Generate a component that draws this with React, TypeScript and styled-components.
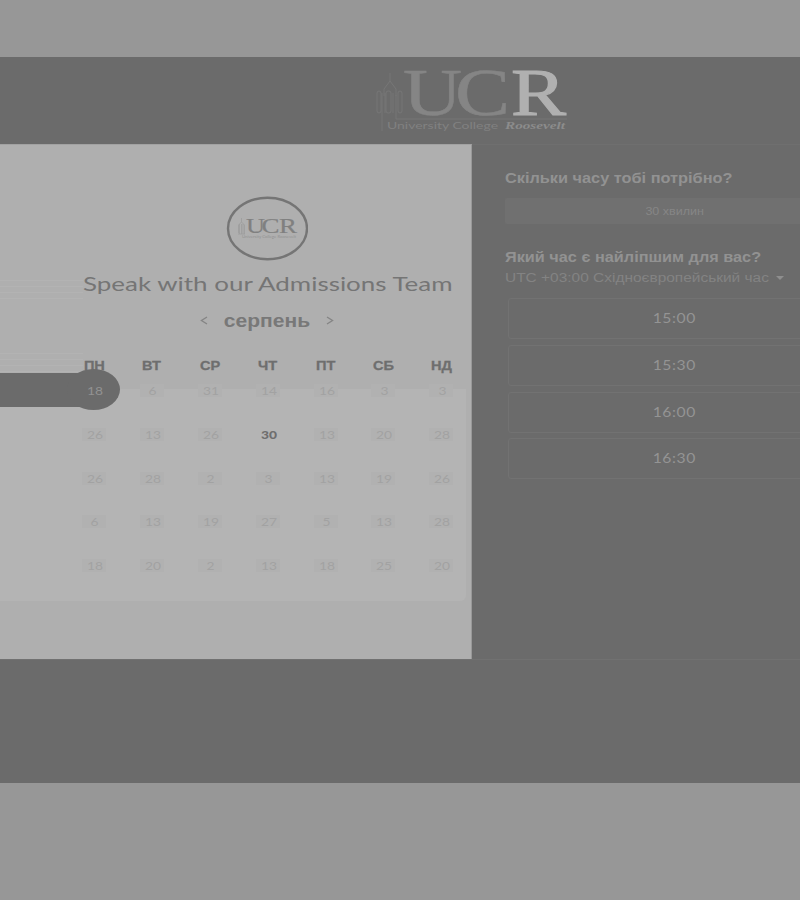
import React from "react";
import styled, { createGlobalStyle } from "styled-components";

const Global = createGlobalStyle`
  * { box-sizing: border-box; }
  body { margin: 0; background: #979797; overflow: hidden; }
`;

const Page = styled.div`
  width: 800px;
  height: 900px;
  padding-top: 57px;
  overflow: hidden;
  background: #979797;
  font-family: "Liberation Sans", Arial, sans-serif;
`;

const Modal = styled.div`
  height: 726px;
  background: #6b6b6b;
`;

const Header = styled.header`
  height: 87px;
  padding: 7px 0 0 370px;

  svg { overflow: visible; }
`;

const Body = styled.main`
  display: grid;
  grid-template-columns: 472px 1fr;
  height: 516px;
  border-bottom: 1px solid #717171;
`;

const CalendarPanel = styled.section`
  position: relative;
  display: flex;
  flex-direction: column;
  height: 515px;
  background: #afafaf;
  border-top: 1px solid #a2a2a2;
  border-right: 1px solid #999;
`;

const Seal = styled.div`
  padding: 51px 0 0 226px;
  height: 123px;
`;

/* Wide lettering: glyphs are stretched horizontally about their centre or left edge. */
const Wide = styled.span<{ $x: number; $left?: boolean }>`
  display: inline-block;
  white-space: nowrap;
  transform: scaleX(${(p) => p.$x});
  transform-origin: ${(p) => (p.$left ? "left" : "center")} center;
`;

const Title = styled.h1`
  margin: 0 0 0 83px;
  height: 33px;
  font: 400 20px/31px Lato, sans-serif;
  color: #757575;
`;

const MonthNav = styled.div`
  display: flex;
  align-items: center;
  justify-content: space-between;
  width: 136px;
  height: 40px;
  margin-left: 199px;
  font-size: 18px;
  font-weight: 700;
  color: #787878;
`;

const Week = styled.div`
  display: grid;
  grid-template-columns: repeat(7, 57.9px);
  padding-left: 65px;
  justify-items: center;
  align-items: center;
`;

const Weekdays = styled(Week)`
  height: 24px;
  margin-top: 12px;
  font-size: 13px;
  font-weight: 700;
  color: #6e6e6e;
  -webkit-text-stroke: 0.3px #6e6e6e;
`;

const Days = styled(Week)`
  position: relative;
  width: 466px;
  height: 232px;
  margin-top: -8px;
  padding-bottom: 14px;
  grid-auto-rows: 43.7px;
  border-radius: 0 0 6px 0;
  background: linear-gradient(transparent 20px, #b4b4b4 20px);
`;

const Day = styled.span<{ $kind: "plain" | "open" | "picked" }>`
  position: relative;
  width: 24px;
  height: 13px;
  font: ${(p) => (p.$kind === "open" ? 900 : 400)} 12px/13px Lato, sans-serif;
  text-align: center;
  text-indent: 1px;
  color: ${(p) => (p.$kind === "open" ? "#6e6e6e" : p.$kind === "picked" ? "#929292" : "#a2a2a2")};
  background: ${(p) => (p.$kind === "plain" ? "#b1b1b1" : "transparent")};
`;

const Selection = styled.div`
  position: absolute;
  left: 0;
  top: 4px;
  width: 94px;
  height: 34px;
  background: #6b6b6b;
  &::after {
    content: "";
    position: absolute;
    left: 67px;
    top: -4px;
    width: 53px;
    height: 41px;
    border-radius: 50%;
    background: #6b6b6b;
  }
`;

const Streaks = styled.div<{ $top: number; $width: number; $height: number }>`
  position: absolute;
  left: 0;
  top: ${(p) => p.$top}px;
  width: ${(p) => p.$width}px;
  height: ${(p) => p.$height}px;
  background: repeating-linear-gradient(#b3b3b3 0 1px, #afafaf 1px 6px);
`;

const Options = styled.section`
  padding: 23px 0 0 33px;
  border-top: 1px solid #6f6f6f;
  overflow: hidden;
`;

const Question = styled.h2`
  margin: 0;
  height: 20px;
  font-size: 14px;
  line-height: 20px;
  font-weight: 700;
  color: #929292;
`;

const Duration = styled.div`
  width: 340px;
  height: 26px;
  margin: 10px 0 23px;
  border-radius: 2px;
  background: #707070;
  font-size: 11px;
  line-height: 26px;
  text-align: center;
  color: #868686;
`;

const Zone = styled.div`
  display: flex;
  align-items: center;
  height: 22px;
  font-size: 12px;
  color: #838383;
`;

const ZoneText = styled.div`
  width: 271px;
`;

const Caret = styled.i`
  border: 4px solid transparent;
  border-top-color: #8e8e8e;
  border-bottom: 0;
`;

const Slots = styled.div`
  display: grid;
  grid-auto-rows: 41px;
  gap: 5.8px;
  width: 332px;
  margin: 9px 0 0 3px;
`;

const Slot = styled.button`
  padding: 0 0 2px;
  border: 1px solid #727272;
  border-radius: 3px;
  background: transparent;
  font: 400 14px/37px Lato, sans-serif;
  letter-spacing: 0.5px;
  color: #949494;
`;

const Tower = () => (
  <g fill="none" stroke="#777" strokeWidth="1">
    <path d="M20 16v8l-6 8v7M20 24l6 8v7" />
    <rect x="7" y="34" width="4" height="22" rx="2" />
    <rect x="16" y="34" width="5" height="22" rx="2" />
    <rect x="28" y="34" width="4" height="22" rx="2" />
    <path d="M12 36v38M15 36v20M23 36v20M26 38v24h171" />
  </g>
);

const Logo = () => (
  <svg width="210" height="76" viewBox="0 7 210 76" role="img" aria-label="University College Roosevelt">
    <Tower />
    <g fontFamily="Liberation Serif, serif" fontSize="67">
      <text x="33" y="58" textLength="59" lengthAdjust="spacingAndGlyphs" fill="#858585" stroke="#858585" strokeWidth=".5">U</text>
      <text x="85" y="58" textLength="55" lengthAdjust="spacingAndGlyphs" fill="#858585" stroke="#858585" strokeWidth=".5">C</text>
      <text x="141" y="58" textLength="55" lengthAdjust="spacingAndGlyphs" fill="#b0b0b0" stroke="#b0b0b0" strokeWidth="1.100">R</text>
    </g>
    <text x="17" y="72" fontFamily="Lato, sans-serif" fontSize="9" textLength="111" lengthAdjust="spacingAndGlyphs" fill="#818181">University College</text>
    <text x="135" y="72" fontFamily="Liberation Serif, serif" fontSize="11" fontStyle="italic" fontWeight="700" textLength="60" lengthAdjust="spacingAndGlyphs" fill="#8c8c8c">Roosevelt</text>
  </svg>
);

const SealMark = () => (
  <svg width="82" height="65" viewBox="0 0 82 65">
    <ellipse cx="41.500" cy="32.500" rx="39.500" ry="30.800" fill="none" stroke="#757575" strokeWidth="2.400" />
    <path d="M15.500 22v4l-3 3v8M15.500 26l3 3v9M13.500 28v10M15.500 28v10M17 28v10M12 38h7" fill="none" stroke="#9c9c9c" strokeWidth=".8" />
    <g fontFamily="Liberation Serif, serif" fontSize="22" fill="#808080" stroke="#808080" strokeWidth=".2">
      <text x="20" y="37" textLength="19" lengthAdjust="spacingAndGlyphs">U</text>
      <text x="35.500" y="37" textLength="18" lengthAdjust="spacingAndGlyphs">C</text>
      <text x="53" y="37" textLength="18" lengthAdjust="spacingAndGlyphs">R</text>
    </g>
    <text x="16" y="41.500" fontFamily="Lato, sans-serif" fontSize="3.500" textLength="54" lengthAdjust="spacingAndGlyphs" fill="#929292">University College Roosevelt</text>
  </svg>
);

const Chevron = ({ d }: { d: string }) => (
  <svg width="10" height="10" viewBox="0 0 10 10" fill="none" stroke="#858585" strokeWidth="1.4">
    <path d={d} />
  </svg>
);

const weekdays = ["ПН", "ВТ", "СР", "ЧТ", "ПТ", "СБ", "НД"];
const days = [
  18, 6, 31, 14, 16, 3, 3,
  26, 13, 26, 30, 13, 20, 28,
  26, 28, 2, 3, 13, 19, 26,
  6, 13, 19, 27, 5, 13, 28,
  18, 20, 2, 13, 18, 25, 20,
];
const slots = ["15:00", "15:30", "16:00", "16:30"];

export default function App() {
  return (
    <Page>
      <Global />
      <Modal>
        <Header><Logo /></Header>
        <Body>
          <CalendarPanel>
            <Streaks $top={135} $width={83} $height={24} />
            <Streaks $top={208} $width={83} $height={20} />
            <Seal><SealMark /></Seal>
            <Title><Wide $x={1.297} $left>Speak with our Admissions Team</Wide></Title>
            <MonthNav>
              <Chevron d="M8 1 2.500 4.500 8 8" />
              <Wide $x={1.17}>серпень</Wide>
              <Chevron d="M2 1l5.500 3.500L2 8" />
            </MonthNav>
            <Weekdays>
              {weekdays.map((d) => <Wide key={d} $x={1.12}>{d}</Wide>)}
            </Weekdays>
            <Days>
              <Selection />
              {days.map((d, i) => (
                <Day key={i} $kind={i === 0 ? "picked" : i === 10 ? "open" : "plain"}>
                  <Wide $x={1.15}>{d}</Wide>
                </Day>
              ))}
            </Days>
          </CalendarPanel>
          <Options>
            <Question><Wide $x={1.165} $left>Скільки часу тобі потрібно?</Wide></Question>
            <Duration><Wide $x={1.14}>30 хвилин</Wide></Duration>
            <Question><Wide $x={1.162} $left>Який час є найліпшим для вас?</Wide></Question>
            <Zone>
              <ZoneText><Wide $x={1.288} $left>UTC +03:00 Східноєвропейський час</Wide></ZoneText>
              <Caret />
            </Zone>
            <Slots>
              {slots.map((s) => <Slot key={s}><Wide $x={1.12}>{s}</Wide></Slot>)}
            </Slots>
          </Options>
        </Body>
      </Modal>
    </Page>
  );
}
